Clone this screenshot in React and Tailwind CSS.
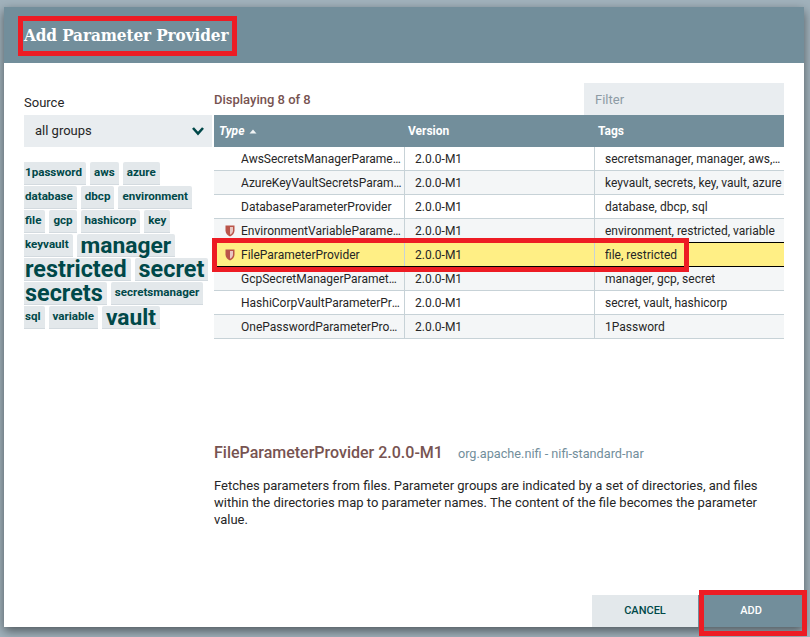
const rows = [
  ["AwsSecretsManagerParameterProvider", "secretsmanager, manager, aws, secrets, secret", false],
  ["AzureKeyVaultSecretsParameterProvider", "keyvault, secrets, key, vault, azure", false],
  ["DatabaseParameterProvider", "database, dbcp, sql", false],
  ["EnvironmentVariableParameterProvider", "environment, restricted, variable", true],
  ["FileParameterProvider", "file, restricted", true],
  ["GcpSecretManagerParameterProvider", "manager, gcp, secret", false],
  ["HashiCorpVaultParameterProvider", "secret, vault, hashicorp", false],
  ["OnePasswordParameterProvider", "1Password", false],
];

const cloud = [
  [["1password", 0], ["aws", 0], ["azure", 0]],
  [["database", 0], ["dbcp", 0], ["environment", 0]],
  [["file", 0], ["gcp", 0], ["hashicorp", 0], ["key", 0]],
  [["keyvault", 0], ["manager", 1]],
  [["restricted", 2], ["secret", 2]],
  [["secrets", 2], ["secretsmanager", 0]],
  [["sql", 0], ["variable", 0], ["vault", 1]],
];

function Shield() {
  return (
    <svg width="10" height="12" viewBox="0 0 10 12" className="shrink-0">
      <path d="M0.5 0.5H9.5V5.5C9.5 8.5 7.5 10.5 5 11.5C2.5 10.5 0.5 8.5 0.5 5.5Z" fill="#ba554a" />
      <path d="M5 2H8V5.5C8 7.5 6.8 8.8 5 9.7Z" fill="#e8c8c3" />
    </svg>
  );
}

function Row({ row, index }) {
  const [name, tags, restricted] = row;
  const selected = index === 4;
  const bg = selected
    ? "bg-[#ffef85] border-t border-b border-black h-[25px] -mt-px"
    : index % 2 === 1
      ? "bg-[#f4f6f7] border-b border-[#c7d2d7] h-[24px]"
      : "bg-white border-b border-[#c7d2d7] h-[24px]";
  return (
    <div className={`flex shrink-0 items-stretch text-[12px] text-[#262626] ${bg}`}>
      <div className="w-[190px] shrink-0 flex items-center pl-[11px] pr-[1px] gap-[6px]">
        <div className="w-[10px] shrink-0 flex items-center">{restricted && <Shield />}</div>
        <span className="truncate">{name}</span>
      </div>
      <div className="w-[190px] shrink-0 flex items-center pl-[10px] border-l border-[#c7d2d7]">2.0.0-M1</div>
      <div className="flex-1 min-w-0 flex items-center pl-[10px] pr-[1px] border-l border-[#c7d2d7]">
        <span className="truncate">{tags}</span>
      </div>
    </div>
  );
}

function Tag({ label, size }) {
  const sizeClass =
    size === 2 ? "text-[23.4px] pt-[2px]" : size === 1 ? "text-[22.8px] pt-[2px]" : "text-[11.6px]";
  return (
    <span
      className={`flex items-center h-[23px] px-[4px] bg-[#e3e8eb] rounded-t-[2px] border-b border-[#d3dadf] font-bold text-[#004849] whitespace-nowrap ${sizeClass}`}
    >
      {label}
    </span>
  );
}

export default function App() {
  return (
    <div className="relative w-[810px] h-[637px] overflow-hidden bg-[#a1b2bc] pt-[7px] pl-[4px] font-['Roboto',sans-serif]">
      <div className="w-[800px] h-[620px] bg-white flex flex-col shadow-[0_4px_10px_rgba(0,0,0,0.5)]">
        <div className="h-[56px] shrink-0 bg-[#728e9b] flex items-center pl-[20px]">
          <h1 className="font-['DejaVu_Serif_Condensed','DejaVu_Serif',serif] font-bold text-[17px] tracking-[-0.1px] text-white leading-none">Add Parameter Provider</h1>
        </div>

        <div className="flex-1 min-h-0 flex pt-[20px] pl-[20px] pr-[20px]">
          <div className="w-[190px] shrink-0 flex flex-col">
            <div className="h-[32px] flex items-end pb-[3px] text-[13px] text-[#262626]">Source</div>
            <div className="h-[32px] bg-[#e9edf0] flex items-center justify-between pl-[11px] pr-[7px] text-[13px] text-[#262626] mr-[2px]">
              <span>all groups</span>
              <svg width="14" height="10" viewBox="0 0 14 10" fill="none">
                <path d="M2 2L7 7.5L12 2" stroke="#004849" strokeWidth="2.6" />
              </svg>
            </div>
            <div className="mt-[15px] flex flex-col gap-[1px] overflow-hidden">
              {cloud.map((line, i) => (
                <div key={i} className="flex gap-[4px] -ml-[3px]">
                  {line.map(([label, size]) => (
                    <Tag key={label} label={label} size={size} />
                  ))}
                </div>
              ))}
            </div>
          </div>

          <div className="flex-1 min-w-0 flex flex-col">
            <div className="h-[32px] shrink-0 flex items-stretch justify-between">
              <div className="flex items-center pt-[1px] text-[13px] font-medium text-[#775351]">Displaying 8 of 8</div>
              <div className="w-[200px] bg-[#e9edf0] flex items-center pl-[11px] pt-[1px] text-[13px] text-[#8d9ba5]">Filter</div>
            </div>
            <div className="h-[32px] shrink-0 flex items-center bg-[#728e9b] text-white text-[12px] font-bold">
              <div className="w-[190px] pl-[5px] flex items-center gap-[5px] italic">
                Type
                <svg width="8" height="5" viewBox="0 0 8 5"><path d="M0.5 4.5L4 0.5L7.5 4.5Z" fill="#ffffff" opacity="0.9" /></svg>
              </div>
              <div className="w-[190px] pl-[4px]">Version</div>
              <div className="pl-[4px]">Tags</div>
            </div>
            <div className="flex flex-col">
              {rows.map((r, i) => (
                <Row key={r[0]} row={r} index={i} />
              ))}
            </div>

            <div className="mt-[102px]">
              <div className="flex items-baseline">
                <span className="text-[16px] font-medium text-[#775351]">FileParameterProvider 2.0.0-M1</span>
                <span className="ml-[15px] text-[12.7px] text-[#728e9b]">org.apache.nifi - nifi-standard-nar</span>
              </div>
              <p className="mt-[12px] text-[13px] leading-[17px] text-[#262626] w-[560px]">
                Fetches parameters from files. Parameter groups are indicated by a set of directories, and files within the directories map to parameter names. The content of the file becomes the parameter value.
              </p>
            </div>
          </div>
        </div>

        <div className="h-[32px] shrink-0 flex justify-end text-[11px] font-medium">
          <button className="w-[106px] bg-[#e3e8eb] text-[#004849]">CANCEL</button>
          <button className="w-[106px] bg-[#728e9b] text-white">ADD</button>
        </div>
      </div>

      <div className="absolute left-[18px] top-[16px] w-[219px] h-[40px] border-[5px] border-[#ed1c24]" />
      <div className="absolute left-[212px] top-[238px] w-[477px] h-[34px] border-[5px] border-[#ed1c24]" />
      <div className="absolute left-[699px] top-[590px] w-[108px] h-[46px] border-[5px] border-[#ed1c24]" />
    </div>
  );
}
